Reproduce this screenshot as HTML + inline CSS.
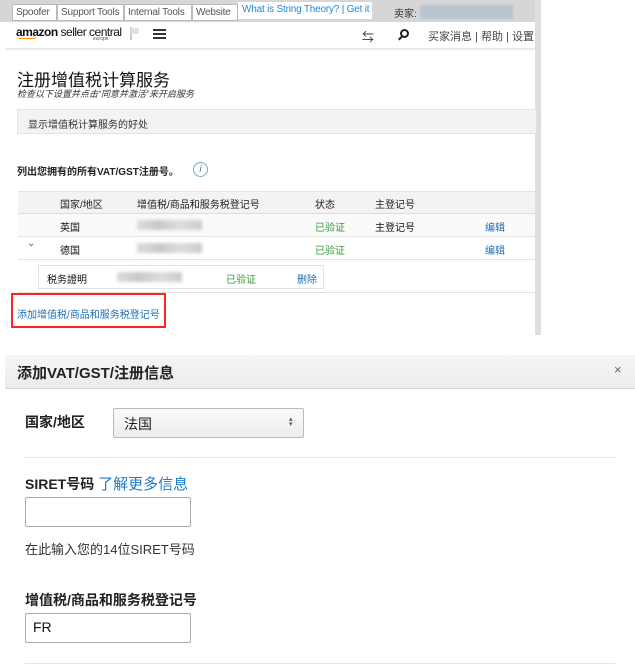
<!DOCTYPE html>
<html><head><meta charset="utf-8"><style>
*{margin:0;padding:0;box-sizing:border-box}
body{width:635px;height:667px;background:#fff;font-family:"Liberation Sans","Noto Sans CJK SC",sans-serif;position:relative;overflow:hidden;color:#111}
.a{position:absolute;white-space:nowrap}
.tab{position:absolute;top:4px;height:17px;background:#fff;border:1px solid #bbb;font-size:10px;color:#555;padding:2px 3px;line-height:12px;overflow:hidden;white-space:nowrap;letter-spacing:-.2px}
.f12{font-size:10px}
.grn{color:#3a9a3a}.blu{color:#1e6fb3}
.blur{position:absolute;background:linear-gradient(90deg,#ddd,#c8c8c8,#ddd,#ccc);filter:blur(1.5px)}
</style></head><body>
<div class="a" style="left:0;top:0;width:535px;height:22px;background:#d6d6d6"></div>
<div class="tab" style="left:12px;width:45px">Spoofer</div>
<div class="tab" style="left:57px;width:67px">Support Tools</div>
<div class="tab" style="left:124px;width:68px">Internal Tools</div>
<div class="tab" style="left:192px;width:46px">Website</div>
<div class="a" style="left:238px;top:2px;width:134px;height:17px;background:#fff;font-size:10px;color:#1e88d6;padding:2px 4px;letter-spacing:-.2px">What is String Theory? | Get it</div>
<div class="a" style="left:394px;top:5px;font-size:10px;color:#333">卖家:</div>
<div class="a" style="left:420px;top:5px;width:93px;height:14px;background:#b8c4d0;filter:blur(1px)"></div>
<div class="a" style="left:535px;top:0;width:6px;height:335px;background:#dedede"></div>
<div class="a" style="left:16px;top:25px;font-size:12px;font-weight:bold;color:#111;letter-spacing:-.5px">amazon <span style="font-weight:normal">seller central</span></div>
<div class="a" style="left:17px;top:36px;width:20px;height:3px;border-bottom:1.5px solid #f90;border-radius:0 0 10px 10px"></div>
<div class="a" style="left:93px;top:36px;font-size:5px;color:#555">europe</div>
<div class="a" style="left:130px;top:27px;width:2px;height:13px;background:#ccc"></div>
<div class="a" style="left:131px;top:28px;width:8px;height:6px;background:#e2e2e2"></div>
<div class="a" style="left:153px;top:29px;width:13px;height:2px;background:#333;box-shadow:0 4px #333,0 8px #333"></div>
<div class="a" style="left:362px;top:28px;font-size:12px;color:#333">⇆</div>
<div class="a" style="left:400px;top:29px;width:9px;height:9px;border:2px solid #222;border-radius:50%"></div>
<div class="a" style="left:398px;top:37px;width:5px;height:2px;background:#222;transform:rotate(-45deg)"></div>
<div class="a" style="left:428px;top:28px;font-size:11px;color:#444">买家消息 | 帮助 | 设置</div>
<div class="a" style="left:5px;top:48px;width:530px;height:2px;background:#eaeaea"></div>
<div class="a" style="left:17px;top:66px;font-size:17px;color:#111">注册增值税计算服务</div>
<div class="a" style="left:17px;top:87px;font-size:9px;font-style:italic;color:#333">检查以下设置并点击“同意并激活”来开启服务</div>
<div class="a" style="left:17px;top:109px;width:520px;height:25px;background:#f3f3f3;border:1px solid #e3e3e3;font-size:10px;color:#333;padding:6px 10px">显示增值税计算服务的好处</div>
<div class="a" style="left:17px;top:163px;font-size:10px;font-weight:bold;color:#222">列出您拥有的所有VAT/GST注册号。</div>
<div class="a" style="left:193px;top:162px;width:15px;height:15px;border:1px solid #7ab;border-radius:50%;font-size:10px;font-style:italic;color:#47a;text-align:center;line-height:13px">i</div>
<div class="a" style="left:18px;top:191px;width:517px;height:23px;background:#f3f3f3;border-top:1px solid #e3e3e3;border-bottom:1px solid #ddd"></div>
<div class="a f12" style="left:60px;top:196px;color:#222">国家/地区</div>
<div class="a f12" style="left:137px;top:196px;color:#222">增值税/商品和服务税登记号</div>
<div class="a f12" style="left:315px;top:196px;color:#222">状态</div>
<div class="a f12" style="left:375px;top:196px;color:#222">主登记号</div>
<div class="a" style="left:18px;top:214px;width:517px;height:23px;background:#fafafa;border-bottom:1px solid #e3e3e3"></div>
<div class="a f12" style="left:60px;top:219px">英国</div>
<div class="blur" style="left:137px;top:220px;width:65px;height:10px"></div>
<div class="a f12 grn" style="left:315px;top:219px">已验证</div>
<div class="a f12" style="left:375px;top:219px">主登记号</div>
<div class="a f12 blu" style="left:485px;top:219px">编辑</div>
<div class="a" style="left:18px;top:237px;width:517px;height:23px;border-bottom:1px solid #e3e3e3"></div>
<div class="a" style="left:27px;top:238px;font-size:10px;color:#666">⌄</div>
<div class="a f12" style="left:60px;top:242px">德国</div>
<div class="blur" style="left:137px;top:243px;width:65px;height:10px"></div>
<div class="a f12 grn" style="left:315px;top:242px">已验证</div>
<div class="a f12 blu" style="left:485px;top:242px">编辑</div>
<div class="a" style="left:38px;top:265px;width:286px;height:24px;border:1px solid #e3e3e3"></div>
<div class="a f12" style="left:47px;top:271px">税务證明</div>
<div class="blur" style="left:117px;top:272px;width:65px;height:10px"></div>
<div class="a f12 grn" style="left:226px;top:271px">已验证</div>
<div class="a f12 blu" style="left:297px;top:271px">删除</div>
<div class="a" style="left:18px;top:292px;width:517px;height:1px;background:#e3e3e3"></div>
<div class="a" style="left:11px;top:293px;width:155px;height:35px;border:2px solid #f22"></div>
<div class="a f12 blu" style="left:17px;top:306px">添加增值税/商品和服务税登记号</div>
<div class="a" style="left:5px;top:355px;width:630px;height:34px;background:linear-gradient(#f6f6f6,#ebebeb);border-bottom:1px solid #d5d5d5"></div>
<div class="a" style="left:17px;top:362px;font-size:15px;font-weight:bold;color:#222">添加VAT/GST/注册信息</div>
<div class="a" style="left:614px;top:362px;font-size:13px;color:#666">×</div>
<div class="a" style="left:25px;top:412px;font-size:14px;font-weight:bold;color:#222">国家/地区</div>
<div class="a" style="left:113px;top:408px;width:191px;height:30px;border:1px solid #bbb;border-radius:2px;background:linear-gradient(#fbfbfb,#ececec);font-size:14px;padding:5px 10px;color:#222">法国</div>
<div class="a" style="left:289px;top:417px;font-size:7px;color:#555;line-height:5px">▴<br>▾</div>
<div class="a" style="left:25px;top:457px;width:590px;height:1px;background:#e5e5e5"></div>
<div class="a" style="left:25px;top:473px;font-size:14px;font-weight:bold;color:#222">SIRET号码 <span style="font-weight:normal;color:#1e7ac8;font-size:15px">了解更多信息</span></div>
<div class="a" style="left:25px;top:497px;width:166px;height:30px;border:1px solid #aaa;border-radius:2px"></div>
<div class="a" style="left:25px;top:539px;font-size:13px;color:#333">在此输入您的14位SIRET号码</div>
<div class="a" style="left:25px;top:590px;font-size:14px;font-weight:bold;color:#222">增值税/商品和服务税登记号</div>
<div class="a" style="left:25px;top:613px;width:166px;height:30px;border:1px solid #aaa;border-radius:2px;font-size:14px;padding:5px 7px">FR</div>
<div class="a" style="left:25px;top:663px;width:590px;height:1px;background:#e5e5e5"></div>
</body></html>
